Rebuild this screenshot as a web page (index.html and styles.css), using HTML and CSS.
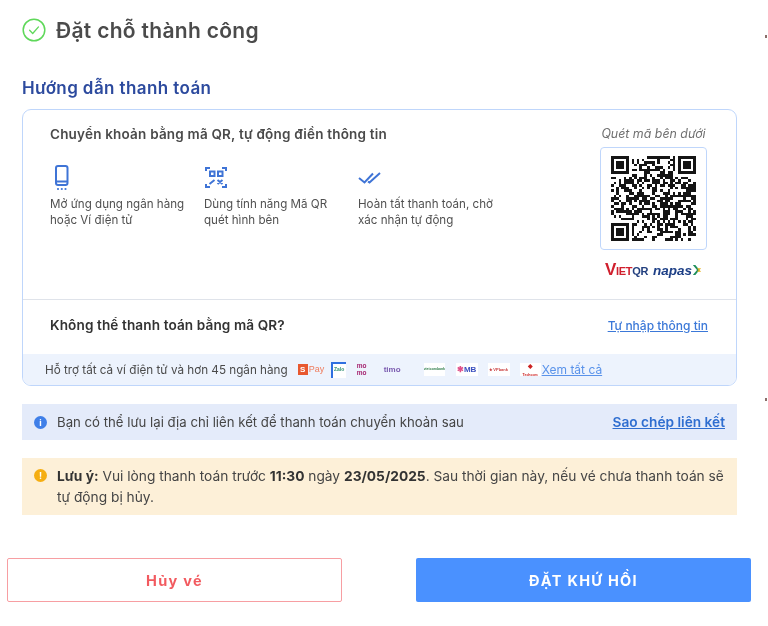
FILE: index.html
```html
<!DOCTYPE html>
<html lang="vi">
<head>
  <meta charset="UTF-8" />
  <meta name="viewport" content="width=device-width, initial-scale=1.0"/>
  <title>Đặt chỗ thành công</title>
  <link rel="stylesheet" href="styles.css">
</head>
<body>
<span class="speck speck-top"></span>
<span class="speck speck-bottom"></span>

<div class="page">
  <header class="success">
    <svg class="success-icon" viewBox="0 0 24 24" fill="none">
      <circle cx="12" cy="12" r="10.8" stroke="#5fd85a" stroke-width="1.5"/>
      <path d="M7.6 12.3l3.1 3.2 5.8-6.6" stroke="#5fd85a" stroke-width="1.3" stroke-linecap="round" stroke-linejoin="round"/>
    </svg>
    <h1>Đặt chỗ thành công</h1>
  </header>

  <h2>Hướng dẫn thanh toán</h2>

  <section class="pay-card">
    <div class="qr-part">
      <div class="qr-guide">
        <h3>Chuyển khoản bằng mã QR, tự động điền thông tin</h3>
        <div class="steps">
          <div class="step">
            <svg class="step-icon" viewBox="0 0 24 26" fill="none">
              <rect x="6" y="1" width="11.5" height="19" rx="2" stroke="#3f74d6" stroke-width="2"/>
              <path d="M6 16.5h11.5" stroke="#3f74d6" stroke-width="2"/>
              <circle cx="8" cy="24" r="1.1" fill="#3f74d6"/>
              <circle cx="11.8" cy="24" r="1.1" fill="#3f74d6"/>
              <circle cx="15.5" cy="24" r="1.1" fill="#3f74d6"/>
            </svg>
            <p>Mở ứng dụng ngân hàng<br>hoặc Ví điện tử</p>
          </div>
          <div class="step">
            <svg class="step-icon step-icon-wide" viewBox="0 0 24 26" fill="none" stroke="#3f74d6" stroke-width="2">
              <path d="M2 6V3h4M18 3h4v3M2 19v3h4M22 19v3h-4"/>
              <rect x="6" y="6.5" width="4.5" height="4.5"/>
              <rect x="14" y="6.5" width="4.5" height="4.5"/>
              <path d="M5.5 19l5-4M13.5 15l5 4M18.5 15l-5 4"/>
            </svg>
            <p>Dùng tính năng Mã QR<br>quét hình bên</p>
          </div>
          <div class="step">
            <svg class="step-icon" viewBox="0 0 24 26" fill="none" stroke="#3f74d6" stroke-width="2">
              <path d="M1 13l5.5 4.5L15 8.5M10 16.5l1.5 1L22 8"/>
            </svg>
            <p>Hoàn tất thanh toán, chờ<br>xác nhận tự động</p>
          </div>
        </div>
      </div>
      <div class="qr-side">
        <span class="qr-label">Quét mã bên dưới</span>
        <div class="qr-box"><svg id="qr" class="qr-code" viewBox="0 0 33 33" shape-rendering="crispEdges"></svg></div>
        <div class="qr-brands">
          <span class="vietqr"><b>V</b><i>IET</i><em>QR</em></span>
          <span class="napas">napas</span>
          <svg class="napas-mark" viewBox="0 0 12 14">
            <path d="M1 1l5 6-5 6h3l5-6-5-6z" fill="#1f8f5c"/>
            <path d="M6 5h5l-2 2 2 2H6l2-2z" fill="#e6b422"/>
          </svg>
        </div>
      </div>
    </div>

    <div class="manual-row">
      <strong>Không thể thanh toán bằng mã QR?</strong>
      <a href="#" class="manual-link">Tự nhập thông tin</a>
    </div>

    <div class="support-row">
      <span class="support-text">Hỗ trợ tất cả ví điện tử và hơn 45 ngân hàng</span>
      <span class="logo logo-shopee"><b>S</b>Pay</span>
      <span class="logo logo-zalo"><span>Zalo</span></span>
      <span class="logo logo-momo">mo<br>mo</span>
      <span class="logo logo-timo">timo</span>
      <span class="logo logo-bank logo-vcb">vietcombank</span>
      <span class="logo logo-bank logo-mb"><i>✱</i>MB</span>
      <span class="logo logo-bank logo-vtb">★VPbank</span>
      <span class="logo logo-bank logo-tcb"><b>◆</b>Techcom</span>
      <a href="#" class="all-link">Xem tất cả</a>
    </div>
  </section>

  <div class="notice notice-info">
    <span class="dot dot-info">i</span>
    <span class="notice-text">Bạn có thể lưu lại địa chỉ liên kết để thanh toán chuyển khoản sau</span>
    <a href="#" class="copy-link">Sao chép liên kết</a>
  </div>

  <div class="notice notice-warn">
    <span class="dot dot-warn">!</span>
    <p><strong>Lưu ý:</strong> Vui lòng thanh toán trước <strong>11:30</strong> ngày <strong>23/05/2025</strong>. Sau thời gian này, nếu vé chưa thanh toán sẽ<br>tự động bị hủy.</p>
  </div>
</div>

<div class="actions">
  <button class="btn btn-cancel">Hủy vé</button>
  <button class="btn btn-return">ĐẶT KHỨ HỒI</button>
</div>

<script src="qr.js"></script>
</body>
</html>
```

FILE: styles.css
```css
* {
  box-sizing: border-box;
}
body {
  margin: 0;
  font-family: 'Inter', 'Noto Sans', sans-serif;
  background: #fff;
  color: #444;
  overflow: hidden;
  filter: blur(0.6px);
}
p, h1, h2, h3 {
  margin: 0;
}
.speck {
  position: absolute;
  left: 765px;
  width: 2px;
  height: 3px;
  background: #8a6f6a;
}
.speck-top { top: 35px; }
.speck-bottom { top: 398px; }

.page {
  width: 715px;
  margin-left: 22px;
  padding-top: 18px;
}
.success {
  display: flex;
  align-items: center;
  gap: 10px;
  height: 24px;
}
.success-icon {
  width: 24px;
  height: 24px;
}
.success h1 {
  font-size: 21px;
  font-weight: 600;
  color: #4b4b4b;
  letter-spacing: 0.3px;
}
h2 {
  margin-top: 34px;
  font-size: 17px;
  line-height: 24px;
  font-weight: 600;
  color: #2c4a9e;
  letter-spacing: 0.4px;
}

.pay-card {
  margin-top: 9px;
  width: 715px;
  height: 277px;
  border: 1.5px solid #bfd6fb;
  border-radius: 9px;
  overflow: hidden;
  display: flex;
  flex-direction: column;
}
.qr-part {
  height: 190px;
  display: flex;
  justify-content: space-between;
  padding: 14px 29px 0 27px;
  border-bottom: 1px solid #dfe3ea;
}
.qr-guide h3 {
  font-size: 13.5px;
  line-height: 20px;
  font-weight: 600;
  color: #4a4a4a;
  letter-spacing: 0.2px;
}
.steps {
  display: flex;
  margin-top: 21px;
}
.step {
  width: 154px;
}
.step-icon {
  display: block;
  width: 24px;
  height: 26px;
  margin-bottom: 3px;
}
.step p {
  font-size: 11.6px;
  line-height: 16px;
  color: #505050;
  padding-top: 2px;
}
.qr-side {
  width: 107px;
  display: flex;
  flex-direction: column;
  align-items: center;
}
.qr-label {
  font-size: 12.4px;
  line-height: 20px;
  font-style: italic;
  color: #6f6f6f;
  white-space: nowrap;
}
.qr-box {
  width: 107px;
  height: 103px;
  margin-top: 3px;
  border: 1.5px solid #bfd6fb;
  border-radius: 4px;
  display: flex;
  align-items: center;
  justify-content: center;
}
.qr-code {
  width: 85px;
  height: 85px;
  fill: #151515;
}
.qr-brands {
  display: flex;
  align-items: center;
  margin-top: 10px;
  height: 20px;
  white-space: nowrap;
}
.vietqr {
  font-family: 'Liberation Sans', sans-serif;
  font-weight: 700;
  letter-spacing: -0.3px;
  margin-right: 5px;
}
.vietqr b {
  font-size: 17px;
  color: #d0202e;
}
.vietqr i {
  font-style: normal;
  font-size: 11px;
  color: #d0202e;
}
.vietqr em {
  font-style: normal;
  font-size: 11px;
  color: #23407f;
}
.napas {
  font-family: 'Liberation Sans', sans-serif;
  font-size: 13.5px;
  font-weight: 700;
  font-style: italic;
  color: #1d3f86;
}
.napas-mark {
  width: 10px;
  height: 14px;
}

.manual-row {
  height: 54px;
  display: flex;
  align-items: center;
  justify-content: space-between;
  padding: 0 28px 4px 27px;
}
.manual-row strong {
  font-size: 13.6px;
  font-weight: 600;
  color: #333;
  letter-spacing: 0.1px;
}
.manual-link {
  font-size: 12px;
  font-weight: 500;
  color: #3b78d8;
}

.support-row {
  flex: 1;
  display: flex;
  align-items: center;
  background: #edf3fd;
  padding-left: 22px;
  font-size: 11.7px;
}
.support-text {
  color: #4a4a4a;
  white-space: nowrap;
  margin-right: 10px;
}
.logo {
  display: block;
  flex: none;
  white-space: nowrap;
  font-family: 'Liberation Sans', sans-serif;
}
.logo-shopee {
  width: 25px;
  margin-right: 8px;
  font-size: 9px;
  color: #ef7d5e;
}
.logo-shopee b {
  display: inline-block;
  width: 10px;
  height: 11px;
  line-height: 11px;
  text-align: center;
  margin-right: 1px;
  background: #e8582f;
  color: #fff;
  font-size: 8px;
}
.logo-zalo {
  width: 15px;
  height: 16px;
  margin-right: 11px;
  background: #fff;
  border-left: 2px solid #2f6fe0;
  border-top: 2px solid #2f6fe0;
  text-align: center;
  font-size: 5px;
  line-height: 10px;
  font-weight: 700;
  color: #2f8f6f;
}
.logo-momo {
  width: 13px;
  margin-right: 14px;
  font-size: 6.5px;
  line-height: 6.5px;
  font-weight: 700;
  color: #a5246f;
}
.logo-timo {
  width: 21px;
  margin-right: 19px;
  font-size: 8px;
  font-weight: 700;
  color: #7b5bb0;
}
.logo-bank {
  height: 13px;
  background: #fff;
  line-height: 13px;
  text-align: center;
  overflow: hidden;
}
.logo-vcb {
  width: 21px;
  margin-right: 11px;
  font-size: 3.5px;
  font-weight: 700;
  color: #2f7d4a;
}
.logo-mb {
  width: 22px;
  margin-right: 10px;
  font-size: 8px;
  font-weight: 700;
  color: #3a4fbf;
}
.logo-mb i {
  font-style: normal;
  color: #e0508a;
}
.logo-vtb {
  width: 22px;
  margin-right: 10px;
  font-size: 4px;
  font-weight: 700;
  color: #c93b3b;
}
.logo-tcb {
  width: 21px;
  font-size: 3.5px;
  font-weight: 700;
  color: #c22;
}
.logo-tcb b {
  display: block;
  font-size: 6px;
  line-height: 6px;
}
.all-link {
  color: #5a93ea;
  font-size: 12px;
  margin-left: 1px;
}

.notice {
  display: flex;
  width: 715px;
  font-size: 13.2px;
  color: #454545;
}
.notice-info {
  margin-top: 18px;
  height: 36px;
  align-items: center;
  background: #e4ebfa;
  padding: 0 12px;
}
.notice-text {
  flex: 1;
}
.copy-link {
  font-size: 13.7px;
  font-weight: 600;
  color: #2f6ed0;
}
.notice-warn {
  margin-top: 18px;
  height: 57px;
  background: #fdf0d8;
  padding: 8px 12px 0;
}
.notice-warn p {
  flex: 1;
  font-size: 13.75px;
  line-height: 21px;
  white-space: nowrap;
}
.notice-warn strong {
  font-weight: 700;
  color: #333;
}
.dot {
  flex: none;
  width: 13px;
  height: 13px;
  border-radius: 50%;
  margin-right: 10px;
  color: #fff;
  font-size: 9px;
  line-height: 13px;
  font-weight: 700;
  text-align: center;
}
.dot-info { background: #3f7fe8; }
.dot-warn {
  background: #f5ae12;
  margin-top: 3px;
}

.actions {
  display: flex;
  justify-content: space-between;
  width: 744px;
  margin: 43px 0 0 7px;
}
.btn {
  width: 335px;
  height: 44px;
  border-radius: 2px;
  font-family: 'Inter', sans-serif;
  font-size: 14.5px;
  font-weight: 700;
  letter-spacing: 1.3px;
  cursor: pointer;
}
.btn-cancel {
  background: #fff;
  border: 1.5px solid #f79ea2;
  color: #f25a5f;
}
.btn-return {
  background: #4a91ff;
  border: none;
  color: #fff;
}
```

FILE: qr.js
```js
// fake qr code, just modules from a small seeded generator
const size = 33;
let seed = 20250523;

function next() {
  seed = (seed * 1103515245 + 12345) & 0x7fffffff;
  return (seed >> 16) & 1;
}

function finderCell(x, y, ox, oy) {
  const dx = x - ox, dy = y - oy;
  if (dx < -1 || dy < -1 || dx > 7 || dy > 7) return null;
  if (dx < 0 || dy < 0 || dx > 6 || dy > 6) return 0;
  if (dx === 0 || dy === 0 || dx === 6 || dy === 6) return 1;
  if (dx >= 2 && dx <= 4 && dy >= 2 && dy <= 4) return 1;
  return 0;
}

let d = "";
for (let y = 0; y < size; y++) {
  for (let x = 0; x < size; x++) {
    let cell = finderCell(x, y, 0, 0);
    if (cell === null) cell = finderCell(x, y, 26, 0);
    if (cell === null) cell = finderCell(x, y, 0, 26);
    if (cell === null) cell = next();
    if (cell) d += `M${x} ${y}h1v1h-1z`;
  }
}
const path = document.createElementNS("http://www.w3.org/2000/svg", "path");
path.setAttribute("d", d);
document.getElementById("qr").appendChild(path);
```
